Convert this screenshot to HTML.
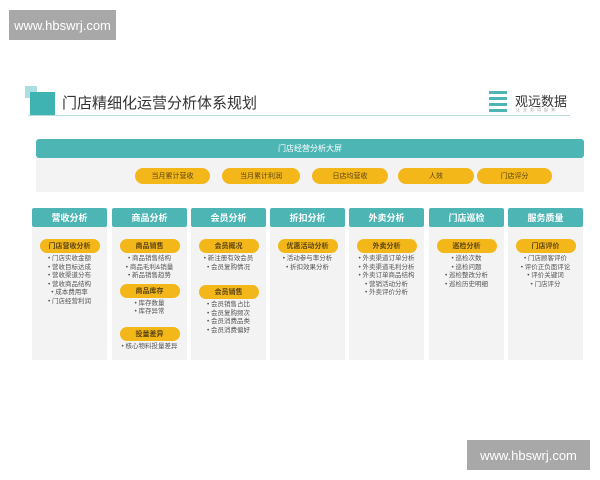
<!DOCTYPE html>
<html><head><meta charset="utf-8"><style>
*{margin:0;padding:0;box-sizing:border-box}
body{width:600px;height:480px;background:#fff;position:relative;overflow:hidden;font-family:"Liberation Sans","Noto Sans CJK SC",sans-serif}
.abs{position:absolute}
.wm{background:#a8a8a8;color:#fff;font-size:13px;display:flex;align-items:center;justify-content:center}
.pill{background:#f4b71a;border-radius:9px;color:#5a4410;font-size:7px;display:flex;align-items:center;justify-content:center}
.col{position:absolute;top:208px;width:75px}
.hd{height:19px;background:#4db6b5;color:#fff;font-size:9px;font-weight:bold;display:flex;align-items:center;justify-content:center;border-radius:2px}
.bd{height:133px;background:#f3f3f3;padding-top:12px}
.sp{width:60px;height:14px;margin:0 auto 2px;background:#f4b71a;border-radius:7px;color:#5a4410;font-size:7px;font-weight:bold;display:flex;align-items:center;justify-content:center}
.it{font-size:6.5px;color:#555;text-align:center;line-height:8.5px}
.it div:before{content:"• "}
</style></head><body>
<div class="abs wm" style="left:9px;top:10px;width:107px;height:30px">www.hbswrj.com</div>
<div class="abs wm" style="left:467px;top:440px;width:123px;height:30px">www.hbswrj.com</div>
<div class="abs" style="left:25px;top:86px;width:12px;height:12px;background:#a9e0df"></div>
<div class="abs" style="left:30px;top:92px;width:25px;height:23px;background:#3fb3b2"></div>
<div class="abs" style="left:62px;top:92px;font-size:15px;color:#333">门店精细化运营分析体系规划</div>
<div class="abs" style="left:28px;top:115px;width:542px;height:1px;background:#b8dcdc"></div>
<div class="abs" style="left:489px;top:91px;width:18px;height:22px">
<div style="height:3px;background:#4db6b5;margin-bottom:3px"></div><div style="height:3px;background:#4db6b5;margin-bottom:3px"></div><div style="height:3px;background:#4db6b5;margin-bottom:3px"></div><div style="height:3px;background:#4db6b5"></div></div>
<div class="abs" style="left:515px;top:91px;font-size:13px;color:#333">观远数据</div>
<div class="abs" style="left:516px;top:107px;font-size:4px;color:#999;letter-spacing:3px">让业务用起来</div>
<div class="abs" style="left:36px;top:139px;width:548px;height:19px;background:#4db6b5;border-radius:3px;color:#fff;font-size:8px;display:flex;align-items:center;justify-content:center">门店经营分析大屏</div>
<div class="abs" style="left:36px;top:158px;width:548px;height:34px;background:#f3f3f3"></div>
<div class="abs pill" style="left:135px;top:168px;width:75px;height:16px">当月累计营收</div>
<div class="abs pill" style="left:222px;top:168px;width:78px;height:16px">当月累计利润</div>
<div class="abs pill" style="left:312px;top:168px;width:76px;height:16px">日店均营收</div>
<div class="abs pill" style="left:398px;top:168px;width:76px;height:16px">人效</div>
<div class="abs pill" style="left:477px;top:168px;width:75px;height:16px">门店评分</div>

<div class="col" style="left:32px"><div class="hd">营收分析</div><div class="bd"><div class="sp">门店营收分析</div><div class="it"><div>门店实收金额</div><div>营收目标达成</div><div>营收渠道分布</div><div>营收商品结构</div><div>成本费用率</div><div>门店经营利润</div></div></div></div>
<div class="col" style="left:112px"><div class="hd">商品分析</div><div class="bd"><div class="sp">商品销售</div><div class="it"><div>商品销售结构</div><div>商品毛利&amp;销量</div><div>新品销售趋势</div></div><div class="sp" style="margin-top:3px">商品库存</div><div class="it"><div>库存数量</div><div>库存异常</div></div><div class="sp" style="margin-top:10px">投量差异</div><div class="it"><div>核心物料投量差异</div></div></div></div>
<div class="col" style="left:191px"><div class="hd">会员分析</div><div class="bd"><div class="sp">会员概况</div><div class="it"><div>新注册有效会员</div><div>会员复购情况</div></div><div class="sp" style="margin-top:13px">会员销售</div><div class="it"><div>会员销售占比</div><div>会员复购频次</div><div>会员消费品类</div><div>会员消费偏好</div></div></div></div>
<div class="col" style="left:270px"><div class="hd">折扣分析</div><div class="bd"><div class="sp">优惠活动分析</div><div class="it"><div>活动参与率分析</div><div>折扣效果分析</div></div></div></div>
<div class="col" style="left:349px"><div class="hd">外卖分析</div><div class="bd"><div class="sp">外卖分析</div><div class="it"><div>外卖渠道订单分析</div><div>外卖渠道毛利分析</div><div>外卖订单商品结构</div><div>营销活动分析</div><div>外卖评价分析</div></div></div></div>
<div class="col" style="left:429px"><div class="hd">门店巡检</div><div class="bd"><div class="sp">巡检分析</div><div class="it"><div>巡检次数</div><div>巡检问题</div><div>巡检整改分析</div><div>巡检历史明细</div></div></div></div>
<div class="col" style="left:508px"><div class="hd">服务质量</div><div class="bd"><div class="sp">门店评价</div><div class="it"><div>门店顾客评价</div><div>评价正负面评论</div><div>评价关键词</div><div>门店评分</div></div></div></div>
</body></html>
